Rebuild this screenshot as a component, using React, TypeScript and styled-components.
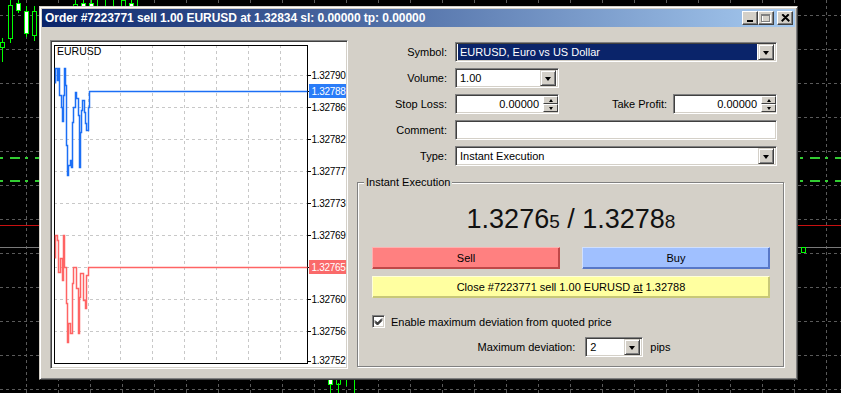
import React from "react";
import styled, { createGlobalStyle } from "styled-components";

const GlobalStyle = createGlobalStyle`
  html, body {
    margin: 0;
    padding: 0;
    background: #000;
    overflow: hidden;
  }
  body {
    font-family: "Liberation Sans", Arial, sans-serif;
    font-size: 11px;
    color: #000;
  }
`;

const Desktop = styled.div`
  position: relative;
  width: 841px;
  height: 393px;
  background: #000;
  overflow: hidden;

  & > svg {
    display: block;
  }
`;

const Window = styled.div`
  position: absolute;
  left: 39px;
  top: 6px;
  width: 759px;
  height: 374px;
  box-sizing: border-box;
  padding: 2px;
  background: #d4d0c8;
  border: 1px solid;
  border-color: #d4d0c8 #404040 #404040 #d4d0c8;
  box-shadow: inset 1px 1px #fff, inset -1px -1px #808080;
`;

const TitleBar = styled.div`
  display: flex;
  align-items: center;
  height: 18px;
  padding: 0 2px 0 3px;
  background: linear-gradient(to right, #0a246a, #a6caf0);
`;

const TitleText = styled.div`
  color: #fff;
  font-weight: bold;
  font-size: 12px;
  letter-spacing: -0.05px;
  white-space: nowrap;
`;

const TitleButtons = styled.div`
  display: flex;
  margin-left: auto;
`;

const CaptionButton = styled.div<{ $gap?: boolean }>`
  width: 16px;
  height: 14px;
  box-sizing: border-box;
  margin-left: ${(p) => (p.$gap ? "3px" : "0")};
  background: #d4d0c8;
  border: 1px solid;
  border-color: #fff #404040 #404040 #fff;
  box-shadow: inset -1px -1px #808080;
  display: flex;
  align-items: center;
  justify-content: center;
`;

const Body = styled.div`
  display: flex;
  gap: 7px;
  padding: 13px 0 0 8px;
`;

const ChartPanel = styled.div`
  width: 298px;
  height: 329px;
  box-sizing: border-box;
  background: #fff;
  border: 1px solid;
  border-color: #808080 #fff #fff #808080;
  box-shadow: inset 1px 1px #404040, inset -1px -1px #d4d0c8;
  padding: 1px;

  & > svg {
    display: block;
  }
`;

const Form = styled.div`
  width: 430px;
  margin-top: 2px;
  display: flex;
  flex-direction: column;
`;

const FieldRow = styled.div`
  display: grid;
  grid-template-columns: 92px 322px;
  column-gap: 8px;
  align-items: center;
  height: 20px;
  margin-bottom: 6px;
`;

const Label = styled.div`
  text-align: right;
  white-space: nowrap;
`;

const Sunken = styled.div<{ $w?: number }>`
  display: flex;
  align-items: center;
  width: ${(p) => (p.$w ? `${p.$w}px` : "100%")};
  height: 20px;
  box-sizing: border-box;
  background: #fff;
  border: 1px solid;
  border-color: #808080 #fff #fff #808080;
  box-shadow: inset 1px 1px #404040, inset -1px -1px #d4d0c8;
  padding: 2px;
  overflow: hidden;
`;

const FieldText = styled.div<{ $selected?: boolean; $right?: boolean }>`
  flex: 1;
  height: 16px;
  line-height: 16px;
  padding: 0 2px;
  white-space: nowrap;
  text-align: ${(p) => (p.$right ? "right" : "left")};
  background: ${(p) => (p.$selected ? "#0a246a" : "transparent")};
  color: ${(p) => (p.$selected ? "#fff" : "#000")};
  margin-right: ${(p) => (p.$selected ? "1px" : "0")};
`;

const DropButton = styled.div`
  width: 16px;
  height: 16px;
  margin-top: -2px;
  margin-bottom: -2px;
  box-sizing: border-box;
  background: #d4d0c8;
  border: 1px solid;
  border-color: #d4d0c8 #404040 #404040 #d4d0c8;
  box-shadow: inset 1px 1px #fff, inset -1px -1px #808080;
  display: flex;
  align-items: center;
  justify-content: center;
  flex-shrink: 0;

  &::after {
    content: "";
    border-left: 3.5px solid transparent;
    border-right: 3.5px solid transparent;
    border-top: 4px solid #000;
    margin-top: 1px;
  }
`;

const Spinner = styled.div`
  display: flex;
  flex-direction: column;
  width: 15px;
  height: 16px;
  margin: -2px -2px -2px 2px;
  flex-shrink: 0;
`;

const SpinButton = styled.div<{ $up?: boolean }>`
  flex: 1;
  box-sizing: border-box;
  background: #d4d0c8;
  border: 1px solid;
  border-color: #fff #404040 #404040 #fff;
  display: flex;
  align-items: center;
  justify-content: center;

  &::after {
    content: "";
    border-left: 2.5px solid transparent;
    border-right: 2.5px solid transparent;
    ${(p) =>
      p.$up ? "border-bottom: 3px solid #000;" : "border-top: 3px solid #000;"}
  }
`;

const SplitCell = styled.div`
  display: flex;
  align-items: center;
  gap: 6px;
`;

const SplitLabel = styled(Label)`
  flex: 1;
`;

const GroupBox = styled.div`
  position: relative;
  margin: 10px 0 0 2px;
  width: 427px;
  height: 185px;
  box-sizing: border-box;
  border: 1px solid #808080;
  box-shadow: inset 1px 1px #fff, 1px 1px #fff;
  padding: 16px 13px 0 14px;
`;

const Legend = styled.div`
  position: absolute;
  top: -7px;
  left: 6px;
  padding: 0 2px;
  background: #d4d0c8;
  line-height: 13px;
`;

const PriceLine = styled.div`
  height: 40px;
  display: flex;
  align-items: baseline;
  justify-content: center;
  font-size: 27px;
  line-height: 40px;
  color: #111;
  white-space: pre;
`;

const SmallDigit = styled.span`
  font-size: 19px;
`;

const ButtonRow = styled.div`
  display: grid;
  grid-template-columns: 1fr 1fr;
  column-gap: 22px;
  margin-top: 8px;
`;

const ColorButton = styled.div<{ $bg: string; $light: string; $dark: string }>`
  height: 22px;
  box-sizing: border-box;
  display: flex;
  align-items: center;
  justify-content: center;
  background: ${(p) => p.$bg};
  border: 1px solid;
  border-color: ${(p) => `${p.$light} ${p.$dark} ${p.$dark} ${p.$light}`};
  box-shadow: inset -1px -1px ${(p) => p.$dark};
  white-space: nowrap;
`;

const CloseButton = styled(ColorButton)`
  margin-top: 7px;
`;

const CheckRow = styled.div`
  display: flex;
  align-items: center;
  gap: 6px;
  height: 13px;
  margin-top: 17px;
`;

const CheckBox = styled.div`
  width: 13px;
  height: 13px;
  box-sizing: border-box;
  background: #fff;
  border: 1px solid;
  border-color: #808080 #fff #fff #808080;
  box-shadow: inset 1px 1px #404040, inset -1px -1px #d4d0c8;
  display: flex;
  align-items: center;
  justify-content: center;
`;

const DeviationRow = styled.div`
  display: flex;
  align-items: center;
  justify-content: center;
  gap: 10px;
  margin-top: 9px;
  height: 20px;
  padding-left: 6px;
`;

const Pips = styled.span`
  margin-left: -3px;
`;

// --- background chart (terminal window behind the dialog) ---

const BackgroundChart = () => {
  const hLines = Array.from({ length: 12 }, (_, i) => 15 + i * 34);
  const vLines = Array.from({ length: 26 }, (_, i) => 26 + i * 32);
  const G = "#00ff00";
  return (
    <svg width="841" height="393" viewBox="0 0 841 393">
      <rect width="841" height="393" fill="#000" />
      {hLines.map((y) => (
        <line key={"h" + y} x1="0" x2="841" y1={y + 0.5} y2={y + 0.5} stroke="#5a5a5a" strokeDasharray="3 3" />
      ))}
      {vLines.map((x) => (
        <line key={"v" + x} x1={x + 0.5} x2={x + 0.5} y1="0" y2="393" stroke="#5a5a5a" strokeDasharray="3 3" />
      ))}
      <line x1="0" x2="841" y1="158" y2="158" stroke="#32cd32" strokeWidth="2" strokeDasharray="3 7 10 5" />
      <line x1="0" x2="841" y1="181" y2="181" stroke="#32cd32" strokeWidth="2" strokeDasharray="3 7 10 5" />
      <line x1="0" x2="841" y1="225.5" y2="225.5" stroke="#c81010" />
      <line x1="0" x2="841" y1="247.5" y2="247.5" stroke="#7a7a7a" />
      <rect x="801.5" y="247.5" width="4" height="5" fill="none" stroke={G} />
      {/* candles top-left */}
      <line x1="2.5" x2="2.5" y1="38" y2="62" stroke={G} />
      <rect x="0.5" y="42.5" width="4" height="5" fill="#000" stroke={G} />
      <line x1="10.5" x2="10.5" y1="0" y2="43" stroke={G} />
      <rect x="8.5" y="5.5" width="4" height="33" fill="#000" stroke={G} />
      <line x1="18.5" x2="18.5" y1="0" y2="13" stroke={G} />
      <rect x="16.5" y="3.5" width="4" height="7" fill="#fff" stroke={G} />
      <line x1="26.5" x2="26.5" y1="6" y2="37" stroke={G} />
      <rect x="24.5" y="11.5" width="4" height="22" fill="#fff" stroke={G} />
      <line x1="34.5" x2="34.5" y1="6" y2="41" stroke={G} />
      <rect x="32.5" y="11.5" width="4" height="24" fill="#000" stroke={G} />
      {[
        [73, 4, 5, "#000"],
        [81, 3, 3, "#fff"],
        [89, 3, 4, "#fff"],
        [121, 0, 6, "#000"],
        [129, 3, 4, "#fff"],
      ].map(([x, y, h, f]) => (
        <g key={"t" + x}>
          <line x1={(x as number) + 2.5} x2={(x as number) + 2.5} y1="0" y2={(y as number) + (h as number) + 3} stroke={G} />
          <rect x={(x as number) + 0.5} y={(y as number) + 0.5} width="4" height={h as number} fill={f as string} stroke={G} />
        </g>
      ))}
      {[97, 105, 113, 137].map((x) => (
        <line key={"w" + x} x1={x + 0.5} x2={x + 0.5} y1="0" y2="6" stroke={G} />
      ))}
      {/* candles bottom */}
      <line x1="330.5" x2="330.5" y1="379" y2="393" stroke={G} />
      <rect x="328.5" y="379.5" width="4" height="5" fill="#fff" stroke={G} />
      <line x1="338.5" x2="338.5" y1="383" y2="393" stroke={G} />
      <path d="M336.5 379 V384.5 H340.5 V379" fill="none" stroke={G} />
      <line x1="346.5" x2="346.5" y1="379" y2="386" stroke={G} />
      <line x1="354.5" x2="354.5" y1="380" y2="393" stroke={G} />
    </svg>
  );
};

// --- order chart inside the dialog ---

const OX = 52;
const OY = 42;

const toPath = (pts: number[][]) =>
  pts.map(([x, y], i) => `${i ? "L" : "M"}${x - OX + 0.5} ${y - OY + 0.5}`).join(" ");

const askPts = [
  [55, 83], [55, 68], [57, 68], [57, 80], [58, 80], [58, 68], [59, 68], [59, 95], [61, 95],
  [61, 107], [62, 107], [62, 121], [63, 121], [63, 95], [64, 95], [64, 68], [65, 68], [65, 85],
  [66, 85], [66, 145], [67, 145], [67, 175], [68, 175], [68, 165], [70, 165], [70, 160], [71, 160],
  [71, 167], [72, 167], [72, 122], [73, 122], [73, 107], [75, 107], [75, 92], [76, 92], [76, 98],
  [78, 98], [78, 115], [79, 115], [79, 167], [80, 167], [80, 132], [81, 132], [81, 110], [82, 110],
  [82, 100], [84, 100], [84, 112], [85, 112], [85, 123], [86, 123], [86, 130], [88, 130], [88, 107],
  [89, 107], [89, 91], [307, 91],
];

const bidPts = [
  [55, 258], [55, 235], [57, 235], [57, 240], [58, 240], [58, 272], [60, 272], [60, 258], [62, 258],
  [62, 280], [63, 280], [63, 235], [64, 235], [64, 267], [66, 267], [66, 303], [67, 303], [67, 342],
  [68, 342], [68, 323], [70, 323], [70, 333], [72, 333], [72, 283], [73, 283], [73, 267], [76, 267],
  [76, 288], [78, 288], [78, 333], [79, 333], [79, 297], [80, 297], [80, 273], [83, 273], [83, 300],
  [85, 300], [85, 308], [86, 308], [86, 275], [88, 275], [88, 267], [307, 267],
];

const priceLevels: [number, string][] = [
  [75, "1.32790"],
  [107, "1.32786"],
  [139, "1.32782"],
  [171, "1.32777"],
  [203, "1.32773"],
  [235, "1.32769"],
  [267, ""],
  [299, "1.32760"],
  [331, "1.32756"],
];

const AxisText = ({ y, children, fill = "#000" }: { y: number; children: string; fill?: string }) => (
  <text
    x="259.5"
    y={y - OY + 4}
    fontFamily="Liberation Sans, Arial, sans-serif"
    fontSize={10}
    letterSpacing={-0.3}
    fill={fill}
  >
    {children}
  </text>
);

const OrderChart = () => {
  const gridX = [88, 120, 152, 184, 216, 248, 280];
  return (
    <svg width="294" height="325" viewBox="0 0 294 325">
      {gridX.map((x) => (
        <line key={x} x1={x - OX + 0.5} x2={x - OX + 0.5} y1="3" y2="322" stroke="#c8c8c8" strokeDasharray="3 3" />
      ))}
      {priceLevels.map(([y]) => (
        <line key={y} x1="2" x2="255" y1={y - OY + 0.5} y2={y - OY + 0.5} stroke="#c8c8c8" strokeDasharray="3 3" />
      ))}
      <rect x="2.5" y="3.5" width="253" height="318" fill="none" stroke="#000" />
      {[...priceLevels.map(([y]) => y), 91, 361].map((y) => (
        <line key={"t" + y} x1="256" x2="259" y1={y - OY + 0.5} y2={y - OY + 0.5} stroke="#000" />
      ))}
      {priceLevels.map(([y, t]) =>
        t ? (
          <AxisText key={"l" + y} y={y}>
            {t}
          </AxisText>
        ) : null
      )}
      <AxisText y={360}>1.32752</AxisText>
      <text x="5" y="13" fontFamily="Liberation Sans, Arial, sans-serif" fontSize={10.5} fill="#000">
        EURUSD
      </text>
      <path d={toPath(askPts)} fill="none" stroke="#1c6ff5" strokeWidth="1.5" />
      <path d={toPath(bidPts)} fill="none" stroke="#ff6464" strokeWidth="1.5" />
      <rect x="257" y={84 - OY} width="37" height="14" fill="#2a7cf8" />
      <AxisText y={91} fill="#fff">
        1.32788
      </AxisText>
      <rect x="257" y={260 - OY} width="37" height="14" fill="#fa6a6a" />
      <AxisText y={267} fill="#fff">
        1.32765
      </AxisText>
    </svg>
  );
};

const SpinField = ({ value }: { value: string }) => (
  <Sunken $w={104}>
    <FieldText $right>{value}</FieldText>
    <Spinner>
      <SpinButton $up />
      <SpinButton />
    </Spinner>
  </Sunken>
);

const App = () => {
  return (
    <>
      <GlobalStyle />
      <Desktop>
        <BackgroundChart />
        <Window>
          <TitleBar>
            <TitleText>Order #7223771 sell 1.00 EURUSD at 1.32834 sl: 0.00000 tp: 0.00000</TitleText>
            <TitleButtons>
              <CaptionButton>
                <svg width="8" height="8" viewBox="0 0 8 8">
                  <rect x="1" y="6" width="6" height="2" fill="#000" />
                </svg>
              </CaptionButton>
              <CaptionButton>
                <svg width="10" height="9" viewBox="0 0 10 9">
                  <rect x="1.5" y="1.5" width="8" height="7" fill="none" stroke="#fff" />
                  <rect x="0.5" y="0.5" width="8" height="7" fill="none" stroke="#808080" />
                  <line x1="0" x2="9" y1="1.5" y2="1.5" stroke="#808080" />
                </svg>
              </CaptionButton>
              <CaptionButton $gap>
                <svg width="9" height="8" viewBox="0 0 9 8">
                  <path d="M1 0.5 L8 7.5 M8 0.5 L1 7.5 M2 0.5 L8.5 7 M7 0.5 L0.5 7" stroke="#000" strokeWidth="1.2" fill="none" />
                </svg>
              </CaptionButton>
            </TitleButtons>
          </TitleBar>
          <Body>
            <ChartPanel>
              <OrderChart />
            </ChartPanel>
            <Form>
              <FieldRow>
                <Label>Symbol:</Label>
                <Sunken>
                  <FieldText $selected>EURUSD, Euro vs US Dollar</FieldText>
                  <DropButton />
                </Sunken>
              </FieldRow>
              <FieldRow>
                <Label>Volume:</Label>
                <Sunken $w={104}>
                  <FieldText>1.00</FieldText>
                  <DropButton />
                </Sunken>
              </FieldRow>
              <FieldRow>
                <Label>Stop Loss:</Label>
                <SplitCell>
                  <SpinField value="0.00000" />
                  <SplitLabel>Take Profit:</SplitLabel>
                  <SpinField value="0.00000" />
                </SplitCell>
              </FieldRow>
              <FieldRow>
                <Label>Comment:</Label>
                <Sunken />
              </FieldRow>
              <FieldRow>
                <Label>Type:</Label>
                <Sunken>
                  <FieldText>Instant Execution</FieldText>
                  <DropButton />
                </Sunken>
              </FieldRow>
              <GroupBox>
                <Legend>Instant Execution</Legend>
                <PriceLine>
                  1.3276<SmallDigit>5</SmallDigit> / 1.3278<SmallDigit>8</SmallDigit>
                </PriceLine>
                <ButtonRow>
                  <ColorButton $bg="#ff8080" $light="#ffb0b0" $dark="#c04848">
                    Sell
                  </ColorButton>
                  <ColorButton $bg="#a0c0ff" $light="#d0e0ff" $dark="#5878c8">
                    Buy
                  </ColorButton>
                </ButtonRow>
                <CloseButton $bg="#ffffa0" $light="#ffffd8" $dark="#c8c878">
                  <span>
                    Close #7223771 sell 1.00 EURUSD <u>at</u> 1.32788
                  </span>
                </CloseButton>
                <CheckRow>
                  <CheckBox>
                    <svg width="9" height="9" viewBox="0 0 9 9">
                      <path d="M1 3.5 L3.5 6 L8 1.5 M1 4.5 L3.5 7 L8 2.5 M1 5.5 L3.5 8 L8 3.5" stroke="#000" fill="none" />
                    </svg>
                  </CheckBox>
                  <span>Enable maximum deviation from quoted price</span>
                </CheckRow>
                <DeviationRow>
                  <span>Maximum deviation:</span>
                  <Sunken $w={58}>
                    <FieldText>2</FieldText>
                    <DropButton />
                  </Sunken>
                  <Pips>pips</Pips>
                </DeviationRow>
              </GroupBox>
            </Form>
          </Body>
        </Window>
      </Desktop>
    </>
  );
};

export default App;
